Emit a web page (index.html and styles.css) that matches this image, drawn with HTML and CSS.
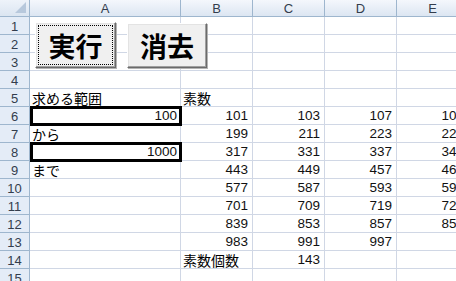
FILE: index.html
```html
<!DOCTYPE html>
<html lang="ja">
<head>
<meta charset="utf-8">
<link rel="stylesheet" href="styles.css">
</head>
<body>
<div class="sheet">
  <div class="grid">
    <div class="corner"><span class="tri"></span></div>
    <div class="ch">A</div><div class="ch">B</div><div class="ch">C</div><div class="ch">D</div><div class="ch">E</div>

    <div class="rh">1</div><div class="c"></div><div class="c"></div><div class="c"></div><div class="c"></div><div class="c"></div>
    <div class="rh">2</div><div class="c"></div><div class="c"></div><div class="c"></div><div class="c"></div><div class="c"></div>
    <div class="rh">3</div><div class="c"></div><div class="c"></div><div class="c"></div><div class="c"></div><div class="c"></div>
    <div class="rh">4</div><div class="c"></div><div class="c"></div><div class="c"></div><div class="c"></div><div class="c"></div>
    <div class="rh">5</div><div class="c t">求める範囲</div><div class="c t">素数</div><div class="c"></div><div class="c"></div><div class="c"></div>
    <div class="rh">6</div><div class="c n box">100</div><div class="c n">101</div><div class="c n">103</div><div class="c n">107</div><div class="c n">109</div>
    <div class="rh">7</div><div class="c t">から</div><div class="c n">199</div><div class="c n">211</div><div class="c n">223</div><div class="c n">227</div>
    <div class="rh">8</div><div class="c n box">1000</div><div class="c n">317</div><div class="c n">331</div><div class="c n">337</div><div class="c n">347</div>
    <div class="rh">9</div><div class="c t">まで</div><div class="c n">443</div><div class="c n">449</div><div class="c n">457</div><div class="c n">463</div>
    <div class="rh">10</div><div class="c"></div><div class="c n">577</div><div class="c n">587</div><div class="c n">593</div><div class="c n">599</div>
    <div class="rh">11</div><div class="c"></div><div class="c n">701</div><div class="c n">709</div><div class="c n">719</div><div class="c n">727</div>
    <div class="rh">12</div><div class="c"></div><div class="c n">839</div><div class="c n">853</div><div class="c n">857</div><div class="c n">859</div>
    <div class="rh">13</div><div class="c"></div><div class="c n">983</div><div class="c n">991</div><div class="c n">997</div><div class="c"></div>
    <div class="rh">14</div><div class="c"></div><div class="c t">素数個数</div><div class="c n">143</div><div class="c"></div><div class="c"></div>
    <div class="rh">15</div><div class="c"></div><div class="c"></div><div class="c"></div><div class="c"></div><div class="c"></div>
  </div>
  <button class="btn btn-run"><span class="focus">実行</span></button>
  <button class="btn btn-clear">消去</button>
</div>
</body>
</html>
```

FILE: styles.css
```css
html, body {
  margin: 0;
  padding: 0;
  background: #ffffff;
  overflow: hidden;
}
.sheet {
  position: relative;
  width: 456px;
  height: 281px;
  overflow: hidden;
}
.grid {
  display: grid;
  grid-template-columns: 30px 151px 72px 72px 72px 72px;
  grid-template-rows: 17px repeat(15, 18px);
  font-family: "Noto Sans CJK JP", sans-serif;
  font-size: 14px;
  color: #000;
}
.corner {
  position: relative;
  background: linear-gradient(#eef3fa, #dbe5f1);
  border-right: 1px solid #9eb6ce;
  border-bottom: 1px solid #9eb6ce;
}
.tri {
  position: absolute;
  right: 3px;
  bottom: 3px;
  width: 0;
  height: 0;
  border-left: 11px solid transparent;
  border-bottom: 11px solid #b7c8dc;
}
.ch {
  background: linear-gradient(#f4f7fc, #dce6f2);
  border-right: 1px solid #9eb6ce;
  border-bottom: 1px solid #9eb6ce;
  font-family: "Liberation Sans", sans-serif;
  font-size: 13px;
  color: #333d4d;
  display: flex;
  align-items: center;
  justify-content: center;
  line-height: 1;
}
.rh {
  background: #e4ecf7;
  border-right: 1px solid #9eb6ce;
  border-bottom: 1px solid #9eb6ce;
  font-family: "Liberation Sans", sans-serif;
  font-size: 13px;
  color: #333d4d;
  display: flex;
  align-items: center;
  justify-content: center;
  line-height: 1;
  padding-top: 1px;
}
.c {
  position: relative;
  border-right: 1px solid #d0d7e5;
  border-bottom: 1px solid #d0d7e5;
  display: flex;
  align-items: center;
  white-space: nowrap;
  line-height: 1;
}
.t {
  padding-left: 2px;
  overflow: visible;
  z-index: 1;
}
.n {
  justify-content: flex-end;
  padding-right: 4px;
  font-family: "Liberation Sans", "Noto Sans CJK JP", sans-serif;
  font-size: 13.5px;
  color: #111;
}
.box {
  padding-right: 3px;
}
.box::after {
  content: "";
  position: absolute;
  left: 0;
  top: -1px;
  right: -2px;
  bottom: -2px;
  border: 3px solid #000;
  z-index: 2;
}
.btn {
  position: absolute;
  top: 22px;
  height: 46px;
  width: 81px;
  padding: 0;
  margin: 0;
  background: #f0f0f0;
  border: 1px solid;
  border-color: #ffffff #6b6b6b #6b6b6b #ffffff;
  box-shadow: inset -1px -1px 0 #a0a0a0, inset 1px 1px 0 #e3e3e3, 1px 1px 0 #b4b4b4;
  font-family: "Noto Sans CJK JP", sans-serif;
  font-weight: 700;
  font-size: 27px;
  color: #000;
  display: flex;
  align-items: center;
  justify-content: center;
  line-height: 1;
  z-index: 3;
}
.btn-run {
  left: 35px;
}
.btn-clear {
  left: 127px;
  top: 23px;
  height: 45px;
  width: 80px;
}
.focus {
  display: flex;
  align-items: center;
  justify-content: center;
  width: 73px;
  height: 38px;
  outline: 1px dotted #000;
}
```
